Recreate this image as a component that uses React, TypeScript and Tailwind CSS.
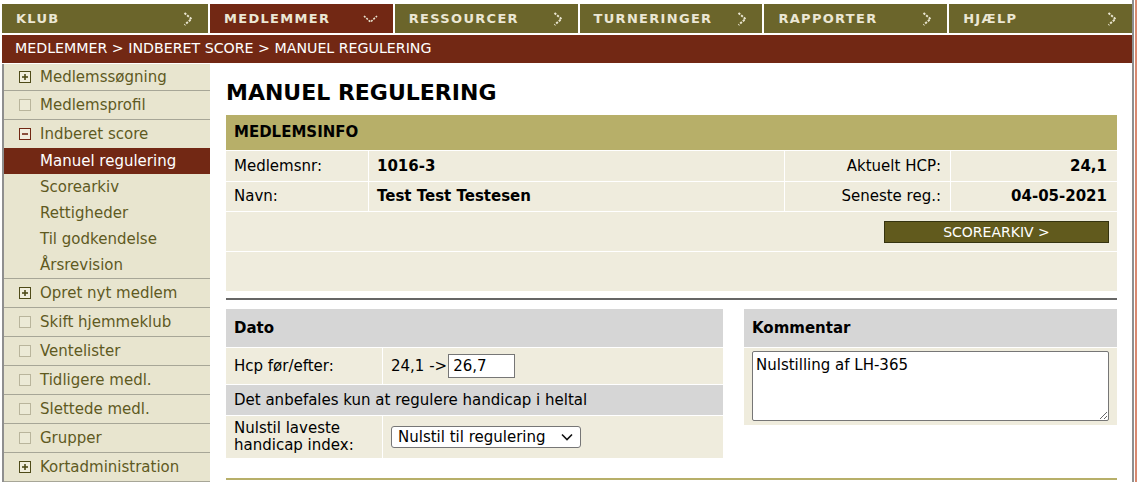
const navItems = [
  { label: 'KLUB', active: false },
  { label: 'MEDLEMMER', active: true },
  { label: 'RESSOURCER', active: false },
  { label: 'TURNERINGER', active: false },
  { label: 'RAPPORTER', active: false },
  { label: 'HJÆLP', active: false },
];

type Icon = 'plus' | 'minus' | 'empty';

const subItems = ['Manuel regulering', 'Scorearkiv', 'Rettigheder', 'Til godkendelse', 'Årsrevision'];

const menuBottom: { label: string; icon: Icon }[] = [
  { label: 'Opret nyt medlem', icon: 'plus' },
  { label: 'Skift hjemmeklub', icon: 'empty' },
  { label: 'Ventelister', icon: 'empty' },
  { label: 'Tidligere medl.', icon: 'empty' },
  { label: 'Slettede medl.', icon: 'empty' },
  { label: 'Grupper', icon: 'empty' },
  { label: 'Kortadministration', icon: 'plus' },
];

function Chevron({ down }: { down: boolean }) {
  if (down) {
    return (
      <svg width="15" height="8" viewBox="0 0 15 8" className="text-[#e9e5d0]">
        <path d="M1 1 L7.5 7 L14 1" fill="none" stroke="currentColor" strokeWidth="1.6" strokeDasharray="2 1.2" />
      </svg>
    );
  }
  return (
    <svg width="10" height="14" viewBox="0 0 10 14" className="text-[#e9e5d0]">
      <path d="M1.5 1 L8.5 7 L1.5 13" fill="none" stroke="currentColor" strokeWidth="2" strokeDasharray="2.2 1.3" />
    </svg>
  );
}

function BoxIcon({ kind }: { kind: Icon }) {
  if (kind === 'empty') {
    return <span className="w-[12px] h-[12px] border border-[#b9b59c] bg-[#ecead6] shrink-0" />;
  }
  const color = kind === 'minus' ? '#722814' : '#4f4b19';
  return (
    <svg width="12" height="12" viewBox="0 0 12 12" className="shrink-0">
      <rect x="0.5" y="0.5" width="11" height="11" fill="#f1eedd" stroke={color} />
      <path d="M3 6 H9" stroke={color} strokeWidth="1.6" />
      {kind === 'plus' && <path d="M6 3 V9" stroke={color} strokeWidth="1.6" />}
    </svg>
  );
}

function MenuItem({ label, icon, h, noBorder }: { label: string; icon: Icon; h: string; noBorder?: boolean }) {
  return (
    <div
      className={
        'flex items-center gap-[9px] pl-[15px] text-[#5f5a1f] ' + h + (noBorder ? '' : ' border-b border-[#a7a697]')
      }
    >
      <BoxIcon kind={icon} />
      <span>{label}</span>
    </div>
  );
}

export default function App() {
  return (
    <div className="w-[1137px] h-[482px] overflow-hidden bg-white flex font-['DejaVu_Sans',Verdana,sans-serif]">
      <div className="ml-[2px] w-[1130px] flex flex-col">
        {/* top navigation */}
        <div className="mt-[4px] h-[30px] flex gap-[2px]">
          {navItems.map((n, i) => (
            <div
              key={n.label}
              className={
                (i === 0 ? 'w-[206px]' : 'flex-1') +
                ' flex items-center justify-between pl-[14px] pr-[15px] pt-px ' +
                (n.active ? 'bg-[#722814]' : 'bg-[#6b652b]')
              }
            >
              <span className="text-[13px] font-bold tracking-[1.3px] text-[#ebe7d4]">{n.label}</span>
              <Chevron down={n.active} />
            </div>
          ))}
        </div>

        {/* breadcrumb */}
        <div className="mt-[2px] h-[29px] bg-[#722814] flex items-center pl-[13px] text-[14.2px] text-white">
          MEDLEMMER &gt; INDBERET SCORE &gt; MANUEL REGULERING
        </div>

        <div className="mt-px flex flex-1">
          {/* sidebar */}
          <div className="w-[208px] bg-[#e8e5cf] border-l-2 border-[#8f8f8f] text-[15px]">
            <MenuItem label="Medlemssøgning" icon="plus" h="h-[27px]" />
            <MenuItem label="Medlemsprofil" icon="empty" h="h-[29px]" />
            <MenuItem label="Indberet score" icon="minus" h="h-[28px]" noBorder />
            <div className="border-b border-[#a7a697]">
              {subItems.map((s, i) => (
                <div
                  key={s}
                  className={
                    'h-[26px] flex items-center pl-[36px] ' +
                    (i === 0 ? 'bg-[#722814] text-white' : 'text-[#5f5a1f]')
                  }
                >
                  {s}
                </div>
              ))}
            </div>
            {menuBottom.map((m) => (
              <MenuItem key={m.label} {...m} h="h-[29px]" />
            ))}
          </div>

          {/* content */}
          <div className="flex-1 pl-[16px] pr-[15px] text-[15px] text-black">
            <h1 className="pt-[16px] text-[22px] leading-[26px] font-bold">MANUEL REGULERING</h1>

            <div className="mt-[9px] grid grid-cols-[142px_415px_165px_1fr] gap-px">
              <div className="col-span-4 h-[35px] bg-[#b7af69] flex items-center pl-[8px] text-[15px] font-bold">
                MEDLEMSINFO
              </div>
              <div className="h-[30px] bg-[#efecdd] flex items-center pl-[8px]">Medlemsnr:</div>
              <div className="h-[30px] bg-[#efecdd] flex items-center pl-[8px] font-bold">1016-3</div>
              <div className="h-[30px] bg-[#efecdd] flex items-center justify-end pr-[9px]">Aktuelt HCP:</div>
              <div className="h-[30px] bg-[#efecdd] flex items-center justify-end pr-[10px] font-bold">24,1</div>
              <div className="h-[29px] bg-[#efecdd] flex items-center pl-[8px]">Navn:</div>
              <div className="h-[29px] bg-[#efecdd] flex items-center pl-[8px] font-bold">Test Test Testesen</div>
              <div className="h-[29px] bg-[#efecdd] flex items-center justify-end pr-[9px]">Seneste reg.:</div>
              <div className="h-[29px] bg-[#efecdd] flex items-center justify-end pr-[10px] font-bold">04-05-2021</div>
              <div className="col-span-4 h-[39px] bg-[#efecdd] flex items-center justify-end pr-[8px]">
                <button className="w-[225px] h-[22px] bg-[#615a1d] border border-[#35330f] text-white text-[14px]">
                  SCOREARKIV &gt;
                </button>
              </div>
              <div className="col-span-4 h-[39px] bg-[#efecdd]" />
            </div>

            <div className="mt-[7px] h-[2px] bg-[#666666]" />

            <div className="mt-[9px] flex gap-[21px]">
              <div className="w-[497px] grid grid-cols-[156px_1fr] gap-px">
                <div className="col-span-2 h-[38px] bg-[#d6d6d6] flex items-center pl-[8px] font-bold">Dato</div>
                <div className="h-[36px] bg-[#efecdd] flex items-center pl-[8px]">Hcp før/efter:</div>
                <div className="h-[36px] bg-[#efecdd] flex items-center pl-[8px]">
                  <span>24,1 -&gt;</span>
                  <input
                    readOnly
                    defaultValue="26,7"
                    className="ml-[1px] w-[67px] h-[24px] border border-[#767676] bg-white px-[4px] text-[15px] outline-none"
                  />
                </div>
                <div className="col-span-2 h-[30px] bg-[#d6d6d6] flex items-center pl-[8px]">
                  Det anbefales kun at regulere handicap i heltal
                </div>
                <div className="h-[42px] bg-[#efecdd] flex items-center pl-[8px] leading-[17px]">
                  Nulstil laveste
                  <br />
                  handicap index:
                </div>
                <div className="h-[42px] bg-[#efecdd] flex items-center pl-[8px]">
                  <div className="w-[190px] h-[22px] border border-[#767676] rounded-[3px] bg-white flex items-center justify-between pl-[6px] pr-[7px]">
                    <span>Nulstil til regulering</span>
                    <svg width="12" height="8" viewBox="0 0 12 8">
                      <path d="M1 1.5 L6 6.5 L11 1.5" fill="none" stroke="#111" strokeWidth="1.6" />
                    </svg>
                  </div>
                </div>
              </div>

              <div className="flex-1 flex flex-col gap-px">
                <div className="h-[38px] bg-[#d6d6d6] flex items-center pl-[8px] font-bold">Kommentar</div>
                <div className="h-[77px] bg-[#efecdd] pl-[8px] pr-[8px] pt-[3px]">
                  <textarea
                    readOnly
                    defaultValue="Nulstilling af LH-365"
                    className="w-full h-[70px] border border-[#767676] rounded-[2px] bg-white px-[3px] py-[2px] text-[15px] outline-none block resize-y"
                  />
                </div>
              </div>
            </div>

            <div className="mt-[20px] h-[2px] bg-[#b7af69]" />
          </div>
        </div>
      </div>
      <div className="w-[2px] bg-[#8f8f8f]" />
      <div className="w-px" />
      <div className="w-[2px] bg-[#d9896f]" />
    </div>
  );
}
